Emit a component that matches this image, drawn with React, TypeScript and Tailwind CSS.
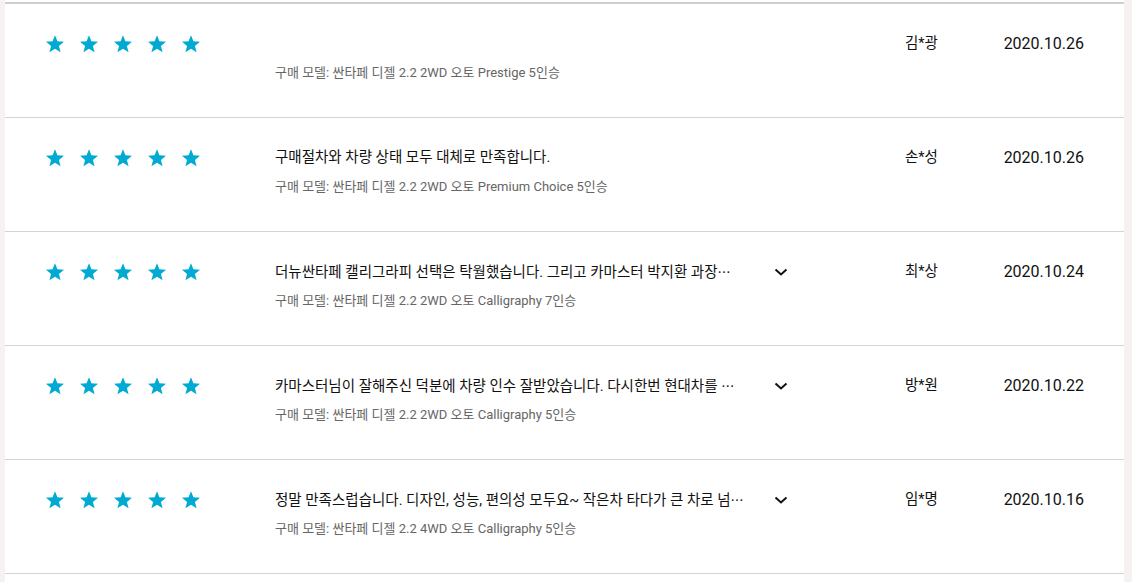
import React from 'react'

type Review = { text: string; cut: boolean; model: string; name: string; date: string }

const reviews: Review[] = [
  { text: '', cut: false, model: '구매 모델: 싼타페 디젤 2.2 2WD 오토 Prestige 5인승', name: '김*광', date: '2020.10.26' },
  { text: '구매절차와 차량 상태 모두 대체로 만족합니다.', cut: false, model: '구매 모델: 싼타페 디젤 2.2 2WD 오토 Premium Choice 5인승', name: '손*성', date: '2020.10.26' },
  { text: '더뉴싼타페 캘리그라피 선택은 탁월했습니다. 그리고 카마스터 박지환 과장', cut: true, model: '구매 모델: 싼타페 디젤 2.2 2WD 오토 Calligraphy 7인승', name: '최*상', date: '2020.10.24' },
  { text: '카마스터님이 잘해주신 덕분에 차량 인수 잘받았습니다. 다시한번 현대차를 ', cut: true, model: '구매 모델: 싼타페 디젤 2.2 2WD 오토 Calligraphy 5인승', name: '방*원', date: '2020.10.22' },
  { text: '정말 만족스럽습니다. 디자인, 성능, 편의성 모두요~ 작은차 타다가 큰 차로 넘', cut: true, model: '구매 모델: 싼타페 디젤 2.2 4WD 오토 Calligraphy 5인승', name: '임*명', date: '2020.10.16' },
]

function Star() {
  return (
    <svg width="20" height="20" viewBox="0 0 24 24" className="shrink-0">
      <polygon
        fill="#00aad2"
        points="12,1.5 14.9,8.8 22.8,9.3 16.7,14.3 18.7,22 12,17.7 5.3,22 7.3,14.3 1.2,9.3 9.1,8.8"
      />
    </svg>
  )
}

function Chevron() {
  return (
    <svg width="14" height="8" viewBox="0 0 14 8" fill="none">
      <path d="M1.5 1.5 L7 6.5 L12.5 1.5" stroke="#111" strokeWidth="2" />
    </svg>
  )
}

function Row({ r }: { r: Review }) {
  return (
    <div className="flex items-start h-[114px] border-b border-[#d4d4d4] pt-[30px]">
      <div className="w-[270px] pl-[40px] flex gap-[14px] h-[20px] items-center">
        {[0, 1, 2, 3, 4].map((i) => (
          <Star key={i} />
        ))}
      </div>
      <div className="w-[470px] flex flex-col gap-[8px]">
        <p className="h-[20px] leading-[20px] text-[14.5px] text-[#111] whitespace-pre">
          {r.text}
          {r.cut && <span className="font-['Noto_Sans_CJK_KR'] text-[13px]">⋯</span>}
        </p>
        <p className="h-[20px] leading-[20px] text-[13px] text-[#666] mt-[1px]">{r.model}</p>
      </div>
      <div className="w-[44px] ml-[29px] h-[20px] flex items-center">
        {r.cut && <Chevron />}
      </div>
      <div className="ml-[87px] w-[60px] h-[20px] leading-[20px] text-[14.5px] text-[#111]">{r.name}</div>
      <div className="ml-auto mr-[40px] h-[20px] leading-[20px] text-[16px] text-[#111]">{r.date}</div>
    </div>
  )
}

export default function App() {
  return (
    <div
      className="w-[1132px] h-[582px] bg-[#f6f2f1] overflow-hidden"
      style={{ fontFamily: 'Roboto, "Noto Sans CJK KR", sans-serif' }}
    >
      <div className="ml-[5px] w-[1119px] h-full bg-white pt-[2px]">
        <div className="border-t-2 border-[#cfcfcf]">
          {reviews.map((r, i) => (
            <Row key={i} r={r} />
          ))}
        </div>
      </div>
    </div>
  )
}
